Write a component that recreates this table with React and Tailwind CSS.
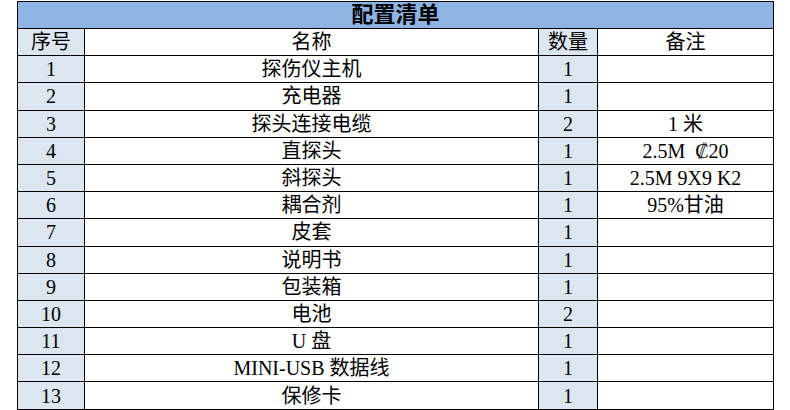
const rows = [
  ["1", "探伤仪主机", "1", ""],
  ["2", "充电器", "1", ""],
  ["3", "探头连接电缆", "2", "1 米"],
  ["4", "直探头", "1", "2.5M  ₡20"],
  ["5", "斜探头", "1", "2.5M 9X9 K2"],
  ["6", "耦合剂", "1", "95%甘油"],
  ["7", "皮套", "1", ""],
  ["8", "说明书", "1", ""],
  ["9", "包装箱", "1", ""],
  ["10", "电池", "2", ""],
  ["11", "U 盘", "1", ""],
  ["12", "MINI-USB 数据线", "1", ""],
  ["13", "保修卡", "1", ""],
];

const font = { fontFamily: '"Liberation Serif", "Noto Sans CJK SC", serif' };

export default function App() {
  return (
    <div className="w-[790px] h-[410px] bg-white pt-px pl-[17px]" style={font}>
      <table className="w-[756px] table-fixed border-collapse text-[20px] leading-none text-black">
        <colgroup>
          <col className="w-[67px]" />
          <col className="w-[454px]" />
          <col className="w-[59px]" />
          <col className="w-[176px]" />
        </colgroup>
        <thead>
          <tr className="h-[27px]">
            <th colSpan={4} className="border border-black bg-[#8db4e2] text-[22px] font-bold p-0">
              配置清单
            </th>
          </tr>
          <tr className="h-[27.2px]">
            <td className="border border-black bg-[#dce6f1] text-center p-0">序号</td>
            <td className="border border-black text-center p-0">名称</td>
            <td className="border border-black bg-[#dce6f1] text-center p-0">数量</td>
            <td className="border border-black text-center p-0">备注</td>
          </tr>
        </thead>
        <tbody>
          {rows.map((r, i) => (
            <tr key={i} className="h-[27.2px]">
              <td className="border border-black bg-[#dce6f1] text-center p-0">{r[0]}</td>
              <td className="border border-black text-center p-0">{r[1]}</td>
              <td className="border border-black bg-[#dce6f1] text-center p-0">{r[2]}</td>
              <td className="border border-black text-center p-0 whitespace-pre">{r[3]}</td>
            </tr>
          ))}
        </tbody>
      </table>
    </div>
  );
}
